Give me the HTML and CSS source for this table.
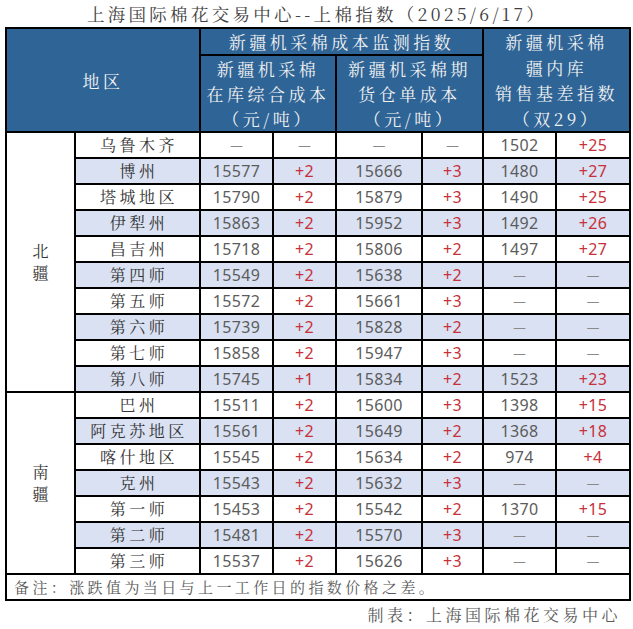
FILE: index.html
```html
<!DOCTYPE html>
<html lang="zh-CN">
<head>
<meta charset="utf-8">
<title>上棉指数</title>
<link rel="stylesheet" href="styles.css">
</head>
<body>
<div class="page">
  <h1 class="title">上海国际棉花交易中心--上棉指数（2025/6/17）</h1>
  <table class="grid">
    <colgroup>
      <col class="c-region"><col class="c-name"><col class="c-num1"><col class="c-chg1"><col class="c-num2"><col class="c-chg2"><col class="c-num3"><col class="c-chg3">
    </colgroup>
    <thead>
      <tr class="hrow1">
        <th rowspan="2" colspan="2">地区</th>
        <th colspan="4">新疆机采棉成本监测指数</th>
        <th rowspan="2" colspan="2" class="tall">新疆机采棉<br>疆内库<br>销售基差指数<br>（双29）</th>
      </tr>
      <tr class="hrow2">
        <th colspan="2">新疆机采棉<br>在库综合成本<br>（元/吨）</th>
        <th colspan="2">新疆机采棉期<br>货仓单成本<br>（元/吨）</th>
      </tr>
    </thead>
    <tbody>
      <tr><td rowspan="10" class="region">北<br>疆</td><td class="name">乌鲁木齐</td><td class="dash">－</td><td class="dash">－</td><td class="dash">－</td><td class="dash">－</td><td class="num">1502</td><td class="chg">+25</td></tr>
      <tr class="alt"><td class="name">博州</td><td class="num">15577</td><td class="chg">+2</td><td class="num">15666</td><td class="chg">+3</td><td class="num">1480</td><td class="chg">+27</td></tr>
      <tr><td class="name">塔城地区</td><td class="num">15790</td><td class="chg">+2</td><td class="num">15879</td><td class="chg">+3</td><td class="num">1490</td><td class="chg">+25</td></tr>
      <tr class="alt"><td class="name">伊犁州</td><td class="num">15863</td><td class="chg">+2</td><td class="num">15952</td><td class="chg">+3</td><td class="num">1492</td><td class="chg">+26</td></tr>
      <tr><td class="name">昌吉州</td><td class="num">15718</td><td class="chg">+2</td><td class="num">15806</td><td class="chg">+2</td><td class="num">1497</td><td class="chg">+27</td></tr>
      <tr class="alt"><td class="name">第四师</td><td class="num">15549</td><td class="chg">+2</td><td class="num">15638</td><td class="chg">+2</td><td class="dash">－</td><td class="dash">－</td></tr>
      <tr><td class="name">第五师</td><td class="num">15572</td><td class="chg">+2</td><td class="num">15661</td><td class="chg">+3</td><td class="dash">－</td><td class="dash">－</td></tr>
      <tr class="alt"><td class="name">第六师</td><td class="num">15739</td><td class="chg">+2</td><td class="num">15828</td><td class="chg">+2</td><td class="dash">－</td><td class="dash">－</td></tr>
      <tr><td class="name">第七师</td><td class="num">15858</td><td class="chg">+2</td><td class="num">15947</td><td class="chg">+3</td><td class="dash">－</td><td class="dash">－</td></tr>
      <tr class="alt"><td class="name">第八师</td><td class="num">15745</td><td class="chg">+1</td><td class="num">15834</td><td class="chg">+2</td><td class="num">1523</td><td class="chg">+23</td></tr>
      <tr><td rowspan="7" class="region">南<br>疆</td><td class="name">巴州</td><td class="num">15511</td><td class="chg">+2</td><td class="num">15600</td><td class="chg">+3</td><td class="num">1398</td><td class="chg">+15</td></tr>
      <tr class="alt"><td class="name">阿克苏地区</td><td class="num">15561</td><td class="chg">+2</td><td class="num">15649</td><td class="chg">+2</td><td class="num">1368</td><td class="chg">+18</td></tr>
      <tr><td class="name">喀什地区</td><td class="num">15545</td><td class="chg">+2</td><td class="num">15634</td><td class="chg">+2</td><td class="num">974</td><td class="chg">+4</td></tr>
      <tr class="alt"><td class="name">克州</td><td class="num">15543</td><td class="chg">+2</td><td class="num">15632</td><td class="chg">+3</td><td class="dash">－</td><td class="dash">－</td></tr>
      <tr><td class="name">第一师</td><td class="num">15453</td><td class="chg">+2</td><td class="num">15542</td><td class="chg">+2</td><td class="num">1370</td><td class="chg">+15</td></tr>
      <tr class="alt"><td class="name">第二师</td><td class="num">15481</td><td class="chg">+2</td><td class="num">15570</td><td class="chg">+3</td><td class="dash">－</td><td class="dash">－</td></tr>
      <tr><td class="name">第三师</td><td class="num">15537</td><td class="chg">+2</td><td class="num">15626</td><td class="chg">+3</td><td class="dash">－</td><td class="dash">－</td></tr>
    </tbody>
    <tfoot>
      <tr><td colspan="8" class="note">备注：涨跌值为当日与上一工作日的指数价格之差。</td></tr>
    </tfoot>
  </table>
  <p class="credit">制表：上海国际棉花交易中心</p>
</div>
</body>
</html>
```
FILE: styles.css
```css
* { box-sizing: border-box; }
html, body { margin: 0; padding: 0; background: #ffffff; }
body {
  font-family: "Noto Serif CJK SC", "Noto Sans CJK SC", sans-serif;
  color: #333333;
}
.page {
  width: 633px;
  padding: 0 4px 0 5px;
}
.title {
  margin: 0;
  height: 27px;
  line-height: 28px;
  font-size: 17.5px;
  font-weight: 400;
  letter-spacing: 3.3px;
  text-align: center;
  color: #404040;
}
.grid {
  width: 624px;
  border-collapse: collapse;
  table-layout: fixed;
  border: 2px solid #000;
}
.c-region { width: 69px; }
.c-name { width: 125px; }
.c-num1 { width: 73px; }
.c-chg1 { width: 63px; }
.c-num2 { width: 86px; }
.c-chg2 { width: 61px; }
.c-num3 { width: 73px; }
.c-chg3 { width: 74px; }
.grid th, .grid td {
  border: 2px solid #000;
  padding: 0;
  text-align: center;
  vertical-align: middle;
}
.grid th {
  background: #2f6496;
  color: #f2f2f2;
  font-weight: 400;
  font-size: 17px;
  letter-spacing: 3.5px;
  line-height: 25px;
}
.hrow1 th { height: 25px; }
.hrow2 th { height: 76px; }
.grid th.tall { line-height: 25.5px; }
.grid td {
  height: 26px;
  font-size: 16px;
  line-height: 22px;
}
.grid tr.alt td { background: #d9e1f2; }
.grid td.region {
  background: #ffffff;
  color: #333333;
  line-height: 22px;
}
.name {
  letter-spacing: 3.5px;
  padding-left: 3px !important;
  color: #333333;
}
.num, .chg {
  font-family: "Liberation Sans Narrow", "Noto Sans", sans-serif;
  font-size: 21px;
  color: #5c5c5c;
  letter-spacing: 0.3px;
}
.chg { color: #c8303a; }
.dash {
  font-family: "Noto Sans CJK JP", "Noto Sans", sans-serif;
  color: #8a8a8a;
  font-size: 15px;
}
.grid td.note {
  text-align: left;
  padding-left: 7px;
  font-size: 15px;
  letter-spacing: 3.4px;
  color: #595959;
  height: 26px;
}
.credit {
  margin: 0;
  height: 28px;
  line-height: 28px;
  text-align: right;
  padding-right: 8px;
  font-size: 16px;
  letter-spacing: 3.5px;
  color: #595959;
}
```
